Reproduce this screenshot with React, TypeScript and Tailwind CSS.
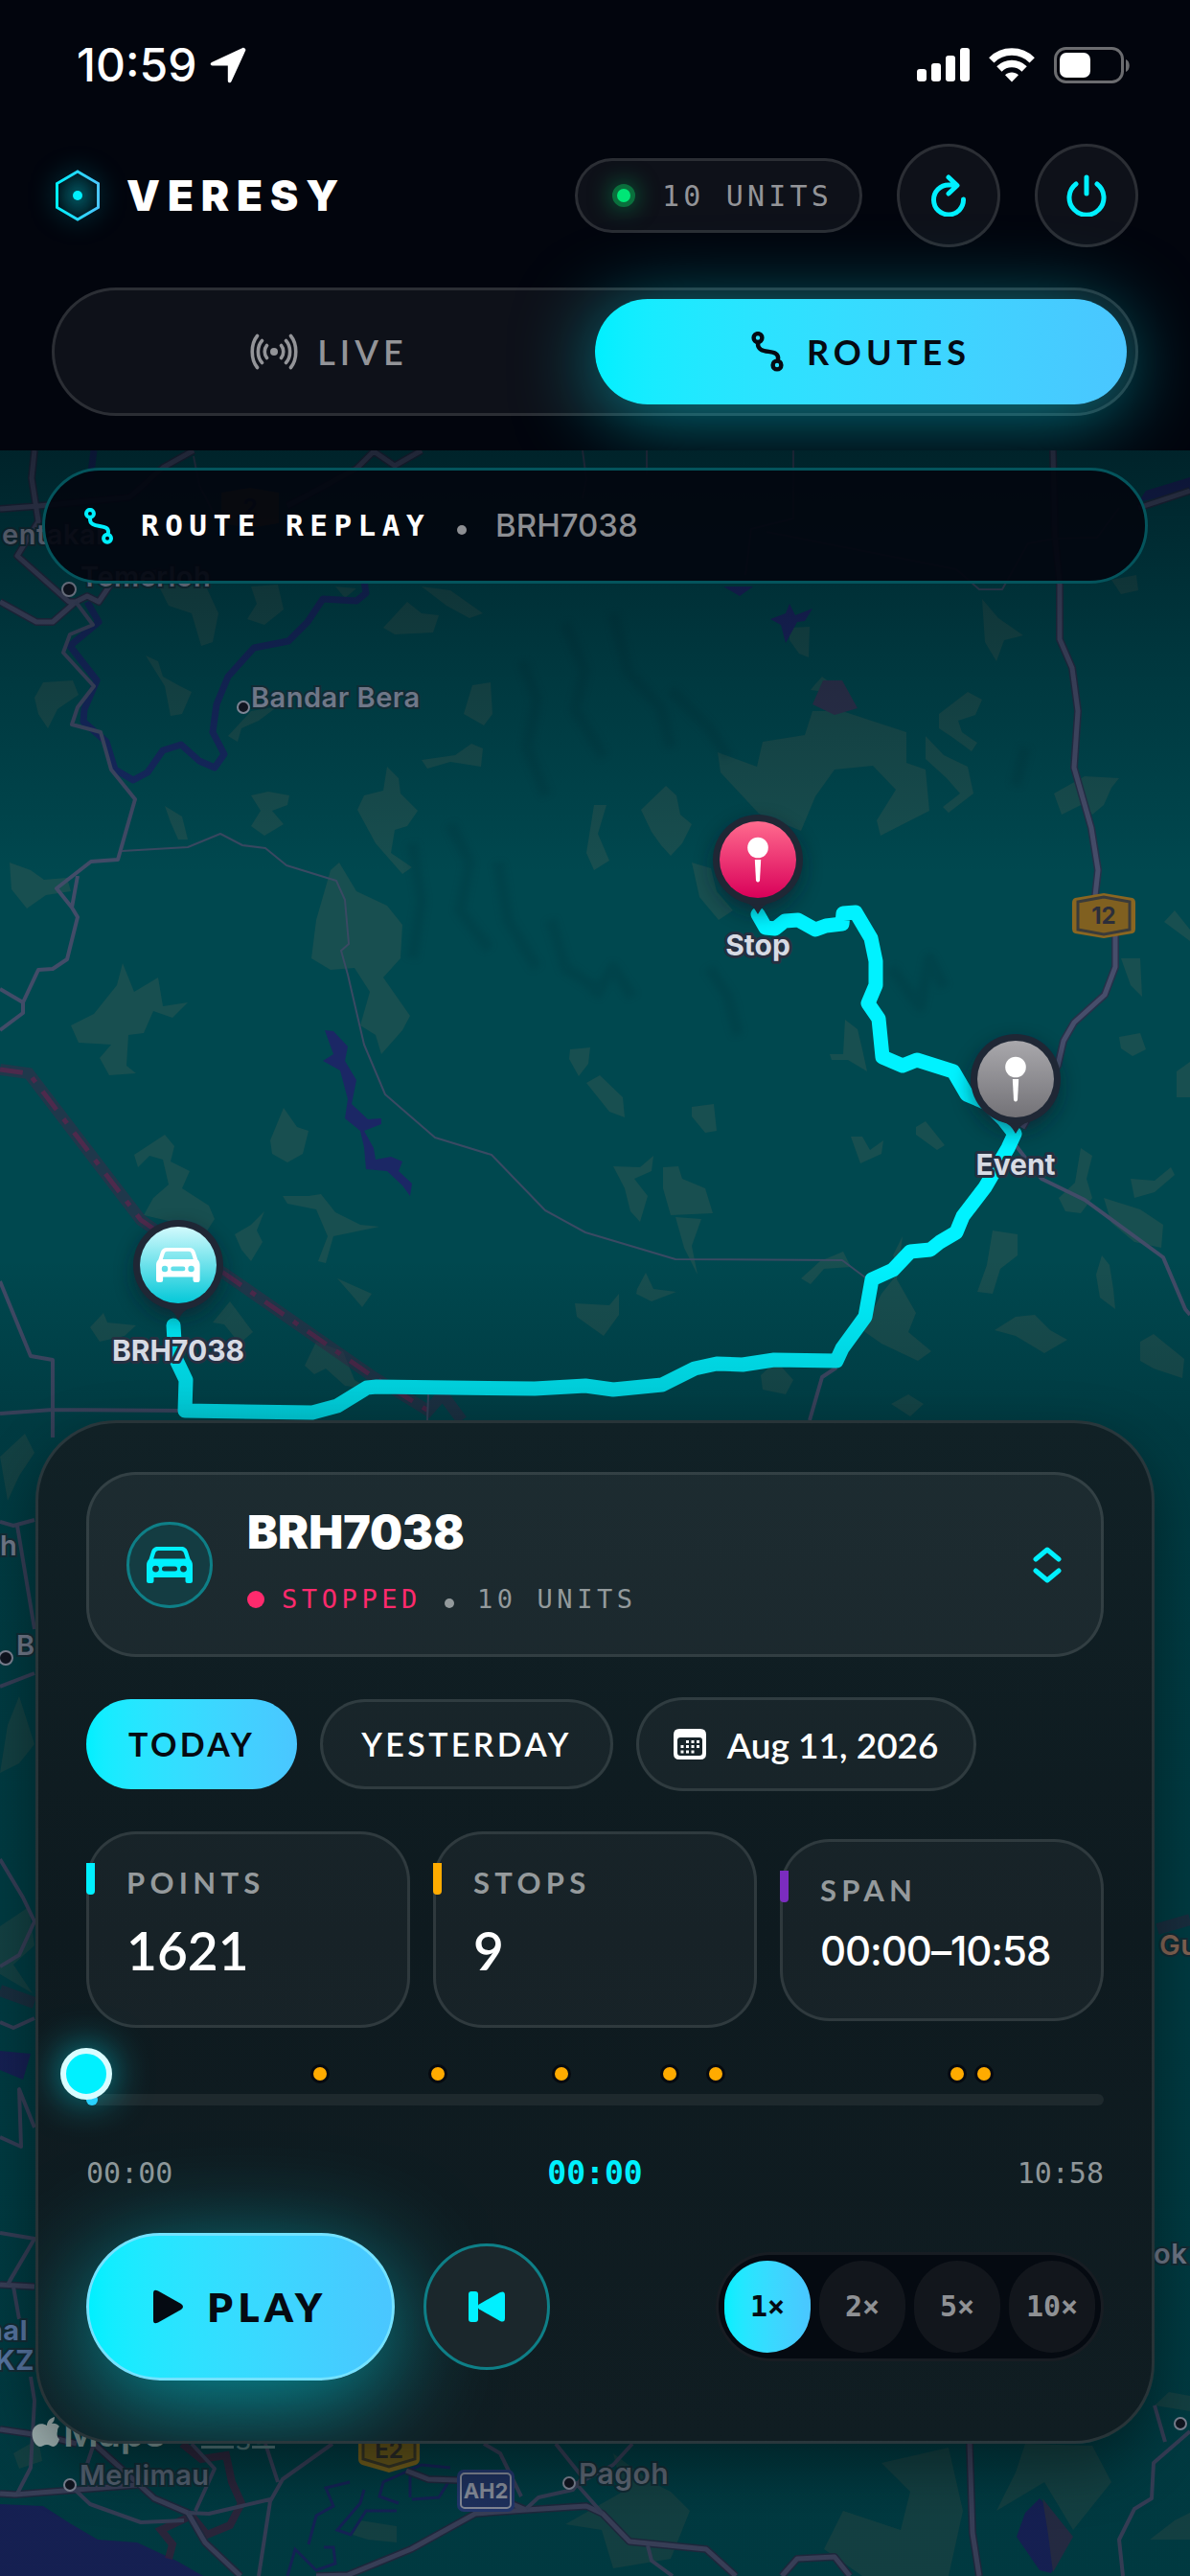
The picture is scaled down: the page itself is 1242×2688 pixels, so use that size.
import { useState } from 'react';
import clsx from 'clsx';

const STOP_MARKS = [23, 34.6, 46.7, 57.3, 61.9, 85.6, 88.2];
const SPEEDS = ['1×', '2×', '5×', '10×'];

const CAR_PATH =
  'M12 0H36C40 0 42 2 43 5L45.500 13C47 14.500 48 16.500 48 19V35.500A2.500 2.500 0 0 1 45.500 38H43A2.500 2.500 0 0 1 40.500 35.500V32H7.500V35.500A2.500 2.500 0 0 1 5 38H2.500A2.500 2.500 0 0 1 0 35.500V19C0 16.500 1 14.500 2.500 13L5 5C6 2 8 0 12 0ZM12.500 4C10.500 4 9.800 4.800 9 6.800L7.200 12.600H40.800L39 6.800C38.200 4.800 37.500 4 35.500 4ZM9.500 19.700A3.400 3.400 0 1 0 9.500 26.500A3.400 3.400 0 1 0 9.500 19.700ZM38.500 19.700A3.400 3.400 0 1 0 38.500 26.500A3.400 3.400 0 1 0 38.500 19.700ZM18.500 20.600H29.500A2.500 2.500 0 0 1 29.500 25.600H18.500A2.500 2.500 0 0 1 18.500 20.600Z';

const ROUTE_PATH =
  'M791 954L799 968L809 969L819 961L833 960L851 970L862 966L879 964L880 953L893 952L909 979L914 1003L914 1028L906 1047L917 1063L921 1103L942 1112L957 1106L995 1118L1009 1142L1030 1151L1048 1169L1059 1183L1052 1198L1028 1239L1005 1269L998 1286L981 1296L971 1304L950 1306L932 1325L910 1335L903 1374L879 1407L873 1420L808 1419L775 1424L748 1423L725 1428L691 1445L640 1450L611 1446L558 1449L393 1447L383 1448L352 1467L326 1474L193 1472L194 1440L183 1417L181 1383';

const VEGETATION_PATH = [
  'M749 785L790 800L796 774L840 767L848 742L879 742L946 764L946 796L966 803L970 846L919 872L915 856L935 824L911 799L871 803L851 831L836 867L792 849L752 806Z',
  'M165 610L215 612L228 640L222 670L210 674L200 640L176 632Z',
  'M262 612L290 610L296 636L276 652L258 646L268 630Z',
  'M350 612L372 614L360 624ZM400 655L425 628L440 640L458 642L452 660L412 662Z',
  'M440 612L470 616L504 640L490 645L466 632Z',
  'M152 684L165 690L170 706L188 716L200 722L190 745L178 747L172 716Z',
  'M45 712L76 710L82 725L60 740L50 760L40 745L36 728Z',
  'M238 768L262 742L290 737L270 752L252 760L248 774Z',
  'M493 715L512 712L514 745L505 757L484 745Z',
  'M440 793L475 788L492 776L504 781L502 800L470 795L446 802Z',
  'M373 845L380 830L400 825L404 800L416 812L418 828L436 846L425 862L412 866L408 890L430 905L420 912L392 880Z',
  'M262 830L280 826L302 830L300 840L284 846L296 860L276 872L262 862L272 846Z',
  'M172 841L190 852L196 876L186 876L178 858Z',
  'M620 840L633 840L624 870L636 898L620 908L612 890Z',
  'M669 845L695 820L706 830L710 850L722 860L712 880L700 893L690 882L680 868Z',
  'M722 900L742 906L748 930L765 950L750 960L730 936Z',
  'M980 745L1010 722L1025 730L1018 746L1000 752L1004 764L1020 775L1014 784L995 770L980 760Z',
  'M966 768L985 788L1010 800L1016 828L990 848L984 842L1002 828L988 812L966 792Z',
  'M1100 828L1132 810L1168 812L1160 822L1152 840L1140 850L1132 838L1108 850Z',
  'M1025 625L1042 645L1068 663L1048 668L1040 690L1028 670ZM1160 605L1186 600L1188 616L1170 620Z',
  'M824 655L845 654L844 686L834 682L824 668ZM850 715L858 706L866 712L862 722L846 720Z',
  'M10 900L32 908L46 918L70 916L74 930L48 934L28 948L12 928Z',
  'M330 960L345 908L354 900L372 930L404 945L420 965L418 1000L400 1020L428 1060L420 1075L398 1100L392 1080L376 1070L386 1035L370 1010L345 1012L325 1000Z',
  'M74 1070L98 1058L122 1028L128 1005L140 1035L165 1020L170 1050L196 1046L180 1062L160 1055L150 1078L134 1080L132 1112L142 1120L114 1122L104 1104L116 1090L82 1088Z',
  'M1170 1000L1190 1000L1192 1040L1180 1028ZM1168 1082L1190 1078L1196 1095L1182 1102L1170 1094Z',
  'M1228 1118L1242 1108V1145H1228ZM1215 962L1226 950L1242 970V982Z',
  'M866 1100L880 1100L882 1064L895 1074L900 1095L905 1118L885 1106L868 1106Z',
  'M595 1095L616 1093L614 1110L604 1123L594 1105ZM612 1130L626 1122L650 1145L652 1166L636 1160Z',
  'M722 1155L745 1152L748 1180L736 1182L722 1165Z',
  'M282 1190L296 1156L310 1176L322 1180L316 1204L300 1213L284 1204Z',
  'M140 1205L172 1184L182 1196L178 1212L198 1222L190 1240L218 1258L224 1272L210 1294L190 1296L180 1275L150 1268L160 1250L176 1236L170 1210L156 1206L144 1218Z',
  'M640 1217L668 1218L682 1206L680 1222L662 1230L676 1248L668 1275L658 1264L652 1240Z',
  'M692 1218L708 1217L712 1230L736 1240L744 1266L700 1268L692 1240Z',
  'M705 1270L732 1272L722 1300L728 1330L714 1302Z',
  'M888 1186L900 1186L908 1200L922 1190L920 1204L898 1214Z',
  'M956 1176L966 1170L986 1195L978 1200L956 1184Z',
  'M1105 1250L1122 1234L1128 1198L1140 1206L1134 1230L1140 1250L1128 1266L1112 1264Z',
  'M1152 1250L1190 1262L1214 1278L1212 1302L1184 1296L1160 1276Z',
  'M1180 1230L1205 1232L1222 1218L1226 1226L1205 1244L1184 1250Z',
  'M295 1248L322 1248L335 1246L350 1265L376 1278L396 1280L348 1290L340 1318L332 1316L342 1290L330 1262L300 1256Z',
  'M245 1288L262 1278L276 1264L268 1284L274 1296L262 1316L252 1304Z',
  'M1036 1284L1062 1288L1062 1310L1044 1324L1036 1350L1020 1348L1030 1320Z',
  'M836 1334L856 1316L880 1306L888 1322L860 1324L846 1340Z',
  'M665 1345L674 1328L682 1345L706 1348L680 1358L664 1350Z',
  'M600 1360L636 1362L646 1350L646 1372L630 1394L602 1374Z',
  'M352 1334L388 1350L378 1364L366 1350Z',
  'M940 1325L932 1310L942 1290L936 1335L956 1370L948 1390L972 1410L958 1420L920 1402L900 1388L920 1350Z',
  'M1150 1310L1158 1320L1162 1345L1164 1366L1148 1354L1144 1330Z',
  'M1038 1388L1060 1374L1080 1372L1096 1388L1114 1398L1090 1412L1060 1394Z',
  'M94 1385L108 1370L112 1380L142 1383L130 1394L104 1400ZM222 1380L240 1358L264 1390L250 1402L234 1382Z',
  'M318 1425L330 1400L358 1410L370 1440L388 1450L360 1446L340 1428L328 1434Z',
  'M794 1435L810 1420L828 1440L820 1455L796 1450ZM930 1465L948 1455L964 1465L950 1478Z',
  'M1190 1400L1204 1392L1236 1418L1234 1438L1204 1428L1190 1420Z',
  'M0 1520L26 1496L36 1516L20 1540L8 1566ZM8 1800L20 1770L36 1820L20 1840L0 1850Z',
  'M0 2010L30 1990L36 2030L14 2050L34 2080L0 2060Z',
  'M14 2560L40 2545L44 2568L20 2576ZM376 2630L414 2636L414 2653L384 2650L368 2645Z',
  'M640 2560L680 2590L700 2600L720 2620L700 2670L640 2680L628 2640L590 2634L650 2600Z',
  'M920 2570L990 2554L1005 2620L990 2688L900 2688L860 2660L880 2620L940 2640L950 2600Z',
  'M1070 2550L1140 2552L1160 2590L1120 2640L1090 2590L1040 2620L1060 2580Z',
  'M1205 2510L1220 2496L1242 2500V2516ZM1200 2650L1226 2630L1242 2622V2650Z',
].join('');

const MAJOR_ROADS = [
  'M1099 470L1101 560L1106 610L1106 667L1119 697L1125 742L1121 801L1139 864L1146 908L1143 935',
  'M1164 975L1164 1009L1153 1038L1121 1067L1110 1086L1104 1112L1067 1177',
  'M202 470L170 488L135 519L40 528L0 531M440 470L412 486L390 471L372 489L300 528',
  'M36 470L33 499L40 544L18 580L72 628L79 628',
  'M0 628L38 649L55 649L79 628L91 622L103 628L118 606L168 596',
  'M0 2602L16 2603L143 2593M0 2535L48 2542L80 2550M98 2550L161 2607L196 2622L214 2653L251 2688',
  'M424 2578L447 2587L478 2588M535 2613L549 2619L612 2615L629 2623L657 2652L737 2660L768 2688',
  'M549 2619L496 2623L429 2660L363 2687L330 2688M1012 2550L1015 2643L1022 2688',
  'M816 2688L832 2670L871 2668L887 2688M1242 512L1188 530M0 2384L36 2386',
].join('');

const MINOR_ROADS = [
  'M79 628L97 652L73 662L66 681L98 716L81 738L75 756L105 764L116 803L141 834L123 897L95 899L59 927L75 947L81 957L70 1001L55 1011L40 1012L24 1046L24 1057L0 1075M0 1032L24 1046M81 914L75 947',
  'M1060 1195L1087 1230L1132 1252L1214 1312L1237 1366L1242 1372',
  'M0 1337L32 1415L55 1419L55 1500M0 1475L55 1471L190 1472M873 1427L858 1437L845 1482',
  'M0 1588L14 1592L36 1586M18 1592L36 1700M0 1760L36 1746M0 1940L24 1980L36 2005L20 2040L0 2052M0 2110L14 2116L36 2106M36 2220L20 2180L22 2240L0 2230',
  'M0 2330L36 2336L10 2380M36 2336L8 2384M14 2386L20 2420M73 2593L94 2613L147 2632L192 2630M347 2550L295 2587L282 2610L270 2688M282 2608L218 2623L196 2622M98 2550L88 2580M277 2550L290 2590M200 2550L224 2576L204 2620M32 2480L36 2505L32 2575L18 2602',
  'M549 2618L562 2606L598 2598L608 2585L580 2550M600 2590L629 2623M660 2550L640 2572L606 2590M505 2550L522 2560L544 2605M1242 2537L1204 2570L1202 2607L1184 2618L1168 2650L1172 2688M676 2656L680 2672L702 2688M1205 2510L1216 2548',
].join('');

const FAINT_ROADS =
  'M127 888L196 884L230 870L253 882L277 885L299 903L351 919L360 939L364 985L356 992L363 1017L380 1090L402 1142L454 1187L513 1205L569 1263L611 1286L705 1314L879 1315L903 1333M202 476L208 506L222 534M608 470L612 500L608 520M675 470V495M828 470V541L784 552L778 600M446 1482L447 1455M800 555L998 594L1022 615L1046 615L1073 567L1101 562L1145 561L1168 530';

function RouteIcon({ className }: { className?: string }) {
  return (
    <svg viewBox="0 0 34 42" fill="none" stroke="currentColor" strokeWidth="4.400" strokeLinecap="round" className={className} aria-hidden>
      <circle cx="7" cy="6.500" r="4.400" />
      <circle cx="27" cy="35" r="4.400" />
      <path d="M7 12C6 26 30 16 28 29" />
    </svg>
  );
}

function CarIcon({ className }: { className?: string }) {
  return (
    <svg viewBox="0 0 48 38" fill="currentColor" fillRule="evenodd" className={className} aria-hidden>
      <path d={CAR_PATH} />
    </svg>
  );
}

function StatusBar() {
  return (
    <div className="flex h-[136px] items-center justify-between pr-[62px] pl-20 text-white">
      <div className="flex items-center gap-[14px]">
        <span className="font-['Inter',sans-serif] text-[48px] leading-none font-medium">10:59</span>
        <svg viewBox="0 0 38 38" className="size-[38px]" fill="currentColor" aria-hidden>
          <path d="M36.500 1.500C37.500 2.200 37.500 3 37.200 3.800L22.500 36C21.500 38.200 18.800 37.500 18.800 35.200V19.500H2.800C0.400 19.500 0 16.900 2 15.900L34.200 1C35 0.700 35.900 0.900 36.500 1.500Z" />
        </svg>
      </div>
      <div className="flex items-center gap-5">
        <svg viewBox="0 0 55 36" className="h-9 w-[55px]" fill="currentColor" aria-hidden>
          <rect y="22" width="10" height="13" rx="3" />
          <rect x="15" y="16" width="10" height="19" rx="3" />
          <rect x="30" y="8" width="10" height="27" rx="3" />
          <rect x="45" width="10" height="35" rx="3" />
        </svg>
        <svg viewBox="0 0 48 36" className="h-9 w-12" fill="none" stroke="currentColor" strokeWidth="7.500" aria-hidden>
          <path d="M2.800 12.800A30 30 0 0 1 45.200 12.800" />
          <path d="M10.900 22A18.500 18.500 0 0 1 37.100 22" />
          <path d="M24 35.500L17 28.300C21 24.600 27 24.600 31 28.300Z" fill="currentColor" stroke="none" />
        </svg>
        <svg viewBox="0 0 80 38" className="h-[38px] w-20" aria-hidden>
          <rect x="1.500" y="1.500" width="70" height="35" rx="11" fill="none" stroke="#6b6c6f" strokeWidth="3" />
          <rect x="6" y="6" width="32" height="26" rx="7" fill="#fff" />
          <path d="M75 13C80 15 80 24 75 26Z" fill="#6b6c6f" />
        </svg>
      </div>
    </div>
  );
}

function Header({ tab, onTabChange }: { tab: string; onTabChange: (tab: string) => void }) {
  const tabClass = 'flex h-[110px] flex-1 items-center justify-center gap-6 rounded-full text-[36px] leading-none tracking-[0.14em]';
  const activeClass = 'bg-linear-to-r from-[#00f0ff] to-[#4ac6ff] font-bold text-[#050a12] shadow-[0_12px_84px_rgba(0,240,255,0.5)]';
  const roundClass = 'flex size-[108px] items-center justify-center rounded-full border-3 border-white/12 bg-white/5 text-[#00f0ff]';

  return (
    <header className="bg-[#02050d] pb-9">
      <StatusBar />
      <div className="flex items-center px-[54px] pt-[14px]">
        <svg viewBox="0 0 54 60" className="h-[60px] w-[54px] drop-shadow-[0_0_12px_rgba(0,240,255,0.5)]" fill="none" aria-hidden>
          <defs>
            <linearGradient id="hex">
              <stop stopColor="#00f0ff" />
              <stop offset="1" stopColor="#4ac6ff" />
            </linearGradient>
            <radialGradient id="hexFill">
              <stop stopColor="#00f0ff" stopOpacity="0.25" />
              <stop offset="1" stopColor="#00f0ff" stopOpacity="0" />
            </radialGradient>
          </defs>
          <path d="M27 5L48.500 17.500V42.500L27 55L5.500 42.500V17.500Z" stroke="url(#hex)" fill="url(#hexFill)" strokeWidth="3" />
          <circle cx="27" cy="30" r="5" fill="#00f0ff" />
        </svg>
        <h1 className="ml-6 font-['Inter',sans-serif] text-[44px] leading-none font-black tracking-[0.18em] text-white">VERESY</h1>
        <div className="ml-auto flex items-center gap-9">
          <div className="flex h-[78px] items-center gap-7 rounded-full border-3 border-white/12 bg-white/5 pr-7 pl-9 font-['DejaVu_Sans_Mono',monospace] text-[30px] tracking-[0.14em] text-[#939498]">
            <span className="size-6 rounded-full border-[5px] border-[#0a6f3c] bg-[#00e676] shadow-[0_0_24px_rgba(0,230,118,0.5)]" />
            10 UNITS
          </div>
          <button type="button" aria-label="Refresh" className={roundClass}>
            <svg viewBox="0 0 44 44" className="size-11" fill="none" stroke="currentColor" strokeWidth="5" strokeLinecap="round" strokeLinejoin="round" aria-hidden>
              <path d="M37.500 26A15.500 15.500 0 1 1 22 11H30M22 3L31 11.500L22 20" />
            </svg>
          </button>
          <button type="button" aria-label="Sign out" className={roundClass}>
            <svg viewBox="0 0 44 44" className="size-11" fill="none" stroke="currentColor" strokeWidth="5" strokeLinecap="round" aria-hidden>
              <path d="M22 3V20M33 10A18 18 0 1 1 11 10" />
            </svg>
          </button>
        </div>
      </div>
      <div className="mx-[54px] mt-[42px] flex rounded-full border-3 border-white/12 bg-white/5 p-[9px]">
        <button
          type="button"
          aria-pressed={tab === 'live'}
          onClick={() => onTabChange('live')}
          className={clsx(tabClass, tab === 'live' ? activeClass : 'font-semibold text-[#939498]')}
        >
          <svg viewBox="0 0 50 38" className="-mr-1 h-[38px] w-[50px]" fill="none" stroke="currentColor" strokeWidth="3.600" strokeLinecap="round" aria-hidden>
            <circle cx="25" cy="19" r="4" fill="currentColor" stroke="none" />
            <path d="M17.500 12.500C14.500 16 14.500 22 17.500 25.500M12.500 7.500C7 13.500 7 24.500 12.500 30.500M7.500 2.500C0.500 11 0.500 27 7.500 35.500M32.500 12.500C35.500 16 35.500 22 32.500 25.500M37.500 7.500C43 13.500 43 24.500 37.500 30.500M42.500 2.500C49.500 11 49.500 27 42.500 35.500" />
          </svg>
          LIVE
        </button>
        <button
          type="button"
          aria-pressed={tab === 'routes'}
          onClick={() => onTabChange('routes')}
          className={clsx(tabClass, tab === 'routes' ? activeClass : 'font-semibold text-[#939498]')}
        >
          <RouteIcon className="h-[42px] w-[34px]" />
          ROUTES
        </button>
      </div>
    </header>
  );
}

function PinBase({ x, y, fill, label }: { x: number; y: number; fill: string; label: string }) {
  return (
    <g transform={`translate(${x} ${y})`}>
      <circle r="47" cy="8" fill="#0c1420" opacity="0.5" filter="url(#soft)" />
      <path d="M-14 44Q-5 47 0 57Q5 47 14 44Z" fill="#1f2735" />
      <circle r="47" fill="#1f2735" />
      <circle r="40" fill={fill} />
      <text y="100" textAnchor="middle" fontSize="30" fontWeight="700" fill="#d7dbe4" stroke="#263041" strokeWidth="6" strokeLinejoin="round" paintOrder="stroke">
        {label}
      </text>
    </g>
  );
}

function PinGlyph({ x, y }: { x: number; y: number }) {
  return (
    <g transform={`translate(${x} ${y})`} fill="#fff">
      <circle cy="-12.500" r="10.800" />
      <path d="M-3.200 0H3.200L2 22Q0 25 -2 22Z" />
    </g>
  );
}

function RouteMap() {
  return (
    <svg viewBox="0 470 1242 2218" preserveAspectRatio="xMidYMin slice" className="absolute inset-0 h-full w-full font-['Inter',sans-serif]" role="img" aria-label="Route map">
      <defs>
        <linearGradient id="shade" x1="0" y1="0" x2="0" y2="1">
          <stop stopColor="#00050c" stopOpacity="0.55" />
          <stop offset="0.1" stopColor="#00050c" stopOpacity="0.25" />
          <stop offset="0.2" stopColor="#00050c" stopOpacity="0" />
          <stop offset="0.38" stopColor="#00050c" stopOpacity="0" />
          <stop offset="0.46" stopColor="#00050c" stopOpacity="0.2" />
          <stop offset="1" stopColor="#00050c" stopOpacity="0.22" />
        </linearGradient>
        <linearGradient id="pinStop" x1="0" y1="0" x2="0" y2="1">
          <stop stopColor="#ff6b8e" />
          <stop offset="1" stopColor="#d90059" />
        </linearGradient>
        <linearGradient id="pinEvent" x1="0" y1="0" x2="0" y2="1">
          <stop stopColor="#a9a8ac" />
          <stop offset="1" stopColor="#737277" />
        </linearGradient>
        <linearGradient id="pinCar" x1="0" y1="0" x2="0" y2="1">
          <stop stopColor="#d2fafd" />
          <stop offset="1" stopColor="#04c8d8" />
        </linearGradient>
        <filter id="soft" x="-50%" y="-50%" width="200%" height="200%">
          <feGaussianBlur stdDeviation="10" />
        </filter>
      </defs>
      <rect y="470" width="1242" height="2218" fill="#00484f" />
      <path d={VEGETATION_PATH} fill="#184f50" />
      {/* terrain ridges */}
      <path
        d="M545 690L560 730L550 780L570 830M590 650L610 700L600 740L630 790M640 640L655 700L690 740L700 780M700 720L740 760L760 790M470 860L490 900L480 950L510 990M520 900L530 960L560 1010M575 960L590 1010L620 1030M430 880L440 940L430 1000M620 1040L640 1010L660 1040M740 1010L760 1040L770 1080M930 1010L960 1050L970 1000L985 1030M1070 780L1060 820"
        fill="none" stroke="#00363e" strokeWidth="12" strokeLinejoin="round" opacity="0.25" filter="url(#ridge)"
      />
      <filter id="ridge">
        <feGaussianBlur stdDeviation="3" />
      </filter>
      <g fill="#1b2765">
        <path d="M339 1075L348 1076L363 1092L360 1107L372 1127L367 1152L384 1168L398 1167L398 1173L380 1180L390 1198L392 1210L408 1207L420 1212L416 1222L430 1235L428 1248L420 1237L404 1222L382 1220L380 1197L376 1180L360 1167L363 1147L355 1117L337 1107L348 1100Z" />
        <path d="M824 630L830 642L848 635L840 648L832 649L820 671L815 652L804 646L820 640ZM755 612L786 612L772 622Z" />
        <path d="M1242 498L1196 512L1188 524L1242 512ZM0 2140L32 2143L24 2170L0 2160Z" />
        <path d="M0 2613L45 2615L73 2633L102 2650L143 2653L184 2672L212 2688H0ZM1085 2607L1105 2630L1118 2647L1097 2685L1085 2682L1061 2647L1070 2622Z" />
      </g>
      <path d="M859 710L879 710L895 739L871 746L848 735ZM1088 2607L1120 2647L1099 2684L1094 2645Z" fill="#2e3450" />
      <path
        d="M380 606L382 619L372 627L337 625L321 649L301 669L265 676L238 706L226 735L222 764L234 787L224 801L208 794L189 777L170 783L154 806L139 814L120 803L111 774L87 753L88 740L101 710L73 674L103 649L91 628M98 470L94 500"
        fill="none" stroke="#162a63" strokeWidth="7" strokeLinejoin="round"
      />
      <path
        d="M365 2590L340 2596L348 2615L330 2625L322 2655M380 2598L376 2612L352 2640L366 2645L382 2620L414 2620M470 2575L440 2572L400 2590L396 2605L416 2612M428 2580V2606M430 2608L458 2606L468 2590M300 2688L308 2660L330 2682L350 2675L348 2658L338 2658"
        fill="none" stroke="#192a68" strokeWidth="3"
      />
      <path d="M0 1116L30 1120L147 1273L186 1300L233 1328L387 1435L447 1472L462 1455L482 1482M0 2077L36 2090M1242 2003L1208 2013" fill="none" stroke="#342f49" strokeWidth="12" opacity="0.6" />
      <path d="M0 1116L30 1120L147 1273L186 1300L233 1328L387 1435L447 1472" fill="none" stroke="#4d2a4c" strokeWidth="5" strokeDasharray="24 12 6 12" />
      <path d="M190 2550L210 2566L236 2562L242 2590L252 2612L240 2635L216 2645L200 2625L168 2640L180 2655L176 2670" fill="none" stroke="#4c2444" strokeWidth="8" opacity="0.7" />
      <g fill="none" strokeLinejoin="round">
        <path d={MAJOR_ROADS} stroke="#263149" strokeWidth="8" />
        <path d={MAJOR_ROADS} stroke="#474e6b" strokeWidth="5" />
        <path d={MINOR_ROADS} stroke="#424c68" strokeWidth="4" />
        <path d={FAINT_ROADS} stroke="#3a4a63" strokeWidth="2" />
        <path d={ROUTE_PATH} stroke="#00f2ff" strokeWidth="15" strokeLinecap="round" />
      </g>
      <g stroke="#9ba2b4" strokeWidth="2" fill="#141925">
        <circle cx="72" cy="615" r="7" />
        <circle cx="254" cy="738" r="6" />
        <circle cx="6" cy="1730" r="7" />
        <circle cx="73" cy="2593" r="6" />
        <circle cx="594" cy="2591" r="6" />
        <circle cx="1232" cy="2529" r="6" />
      </g>
      <g fontSize="29" fontWeight="600" fill="#8c95a8" stroke="#173640" strokeWidth="4" paintOrder="stroke" letterSpacing="0.500">
        <text x="2" y="568">entakab</text>
        <text x="84" y="612">Temerloh</text>
        <text x="262" y="738">Bandar Bera</text>
        <text x="0" y="1623">h</text>
        <text x="17" y="1727">B</text>
        <text x="83" y="2593" fill="#68788a">Merlimau</text>
        <text x="604" y="2592" fontSize="30" fill="#75808f">Pagoh</text>
        <text x="1204" y="2362">ok</text>
        <text x="1210" y="2040" fill="#a37c66">Gu</text>
        <g fill="#6d92c8" fontWeight="700">
          <text x="29" y="2442" textAnchor="end">nal</text>
          <text x="36" y="2473" textAnchor="end">KZ</text>
        </g>
      </g>
      <g textAnchor="middle" fontSize="24" fontWeight="700">
        <path d="M231 514L261 509L291 514V546L261 551L231 546Z" fill="#7d6120" />
        <text x="261" y="538" fill="#262a36">2</text>
        <path d="M1122 937L1152 932L1182 937Q1185 938 1185 942V969Q1185 973 1182 974L1152 979L1122 974Q1119 973 1119 969V942Q1119 938 1122 937Z" fill="#8a6621" />
        <path d="M1125 941L1152 936L1179 941V970L1152 975L1125 970Z" fill="#806020" stroke="#3a3b3a" strokeWidth="3" />
        <text x="1152" y="964" fill="#2c2e3a">12</text>
        <path d="M374 2528H438V2566Q438 2570 434 2572L406 2580L378 2572Q374 2570 374 2566Z" fill="#8d7420" />
        <path d="M379 2528H433V2566L406 2574L379 2566Z" fill="#7d6a1e" stroke="#41402c" strokeWidth="3" />
        <text x="406" y="2565" fill="#34352f">E2</text>
        <rect x="477" y="2577" width="60" height="44" rx="7" fill="#2a4485" />
        <rect x="481" y="2581" width="52" height="36" rx="4" fill="#263d74" stroke="#a4abbb" strokeWidth="2" />
        <text x="507" y="2607" fontSize="22" fill="#a9b0bf">AH2</text>
      </g>
      <rect y="470" width="1242" height="2218" fill="url(#shade)" />
      <g fill="#9eb0b0">
        <path d="M54 2529C56 2527 57 2525 57 2522C53 2523 49 2526 49 2531C51 2531 53 2530 54 2529ZM60 2537C60 2534 61 2533 62 2532C58 2527 53 2529 49 2531C44 2528 38 2529 35 2534C31 2541 36 2553 42 2553C44 2553 46 2551 49 2551C52 2551 53 2553 56 2553C59 2552 61 2549 62 2545C60 2544 59 2541 60 2537Z" />
        <text x="66" y="2553" fontSize="40" fontWeight="600" fill="#7d9696">Maps</text>
        <text x="210" y="2550" fontSize="30" textDecoration="underline" fill="#4f7376">Legal</text>
      </g>
      <PinBase x={791} y={897} fill="url(#pinStop)" label="Stop" />
      <PinGlyph x={791} y={897} />
      <PinBase x={1060} y={1126} fill="url(#pinEvent)" label="Event" />
      <PinGlyph x={1060} y={1126} />
      <PinBase x={186} y={1320} fill="url(#pinCar)" label="BRH7038" />
      <path d={CAR_PATH} transform="translate(163 1302) scale(0.95)" fill="#fff" fillRule="evenodd" />
    </svg>
  );
}

function StatCard({ label, value, accent, compact }: { label: string; value: string; accent: string; compact?: boolean }) {
  return (
    <div className="relative flex-1 basis-0 rounded-[52px] border-3 border-white/10 bg-white/4 pt-8 pb-10 pl-[39px]">
      <span className={clsx('absolute top-[30px] -left-[3px] h-[33px] w-[9px] rounded-b-sm', accent)} />
      <p className="text-[31px] leading-9 font-bold tracking-[0.17em] text-[#959a9c]">{label}</p>
      <p className={clsx('mt-4 whitespace-nowrap text-white', compact ? "font-['Inter',sans-serif] text-[42px] leading-[60px] font-medium tracking-tight" : 'text-[55px] leading-[75px] font-semibold')}>
        {value}
      </p>
    </div>
  );
}

function ReplayPanel() {
  const [speed, setSpeed] = useState('1×');
  const [position, setPosition] = useState(0);
  const chipClass = 'flex items-center rounded-full leading-none text-white';

  return (
    <section className="relative mx-[37px] mb-[138px] overflow-hidden rounded-[84px] border-3 border-white/10 bg-linear-to-b from-[#112126] via-[#0e1a1f] to-[#101d22] px-[50px] pt-[51px] pb-[63px] shadow-[0_24px_60px_rgba(0,0,0,0.4)]">
      <button type="button" className="flex h-[193px] w-full items-center rounded-[52px] border-3 border-white/10 bg-white/5 px-[39px] text-left">
        <span className="flex size-[90px] items-center justify-center rounded-full border-3 border-[#0e7f87] bg-[#143c42] text-[#00f0ff]">
          <CarIcon className="h-[38px] w-12" />
        </span>
        <span className="ml-9 flex flex-col gap-6 pb-3">
          <span className="font-['Inter',sans-serif] text-[48px] leading-[60px] font-black text-white">BRH7038</span>
          <span className="flex items-center font-['DejaVu_Sans_Mono',monospace] text-[27px] leading-8 tracking-[0.17em]">
            <span className="size-[18px] rounded-full bg-[#ff2a6d]" />
            <span className="ml-[18px] text-[#ff2a6d]">STOPPED</span>
            <span className="mt-2 ml-6 size-[10px] rounded-full bg-[#939a9c]" />
            <span className="ml-6 text-[#939a9c]">10 UNITS</span>
          </span>
        </span>
        <svg viewBox="0 0 30 40" className="mr-[2px] ml-auto h-10 w-[30px] text-[#00f0ff]" fill="none" stroke="currentColor" strokeWidth="5" strokeLinecap="round" strokeLinejoin="round" aria-hidden>
          <path d="M3 14L15 4L27 14M3 26L15 36L27 26" />
        </svg>
      </button>

      <div className="mt-[42px] flex items-center gap-6">
        <button type="button" className={clsx(chipClass, 'h-[94px] bg-linear-to-r from-[#00f0ff] to-[#4ac6ff] px-11 text-[34px] font-bold tracking-widest text-[#050a12]!')}>
          TODAY
        </button>
        <button type="button" className={clsx(chipClass, 'h-[94px] border-3 border-white/10 bg-white/4 px-10 text-[34px] font-semibold tracking-widest')}>
          YESTERDAY
        </button>
        <button type="button" className={clsx(chipClass, 'h-[98px] gap-[22px] border-3 border-white/10 bg-white/4 px-9 text-[37px] font-semibold')}>
          <svg viewBox="0 0 34 32" className="h-8 w-[34px]" fill="currentColor" fillRule="evenodd" aria-hidden>
            <path d="M6 0H28Q34 0 34 6V26Q34 32 28 32H6Q0 32 0 26V6Q0 0 6 0ZM7 9Q4 9 4 12V25Q4 28 7 28H27Q30 28 30 25V12Q30 9 27 9Z" />
            <path d="M13 12H16V15H13ZM18.500 12H21.500V15H18.500ZM24 12H27V15H24ZM7.500 17H10.500V20H7.500ZM13 17H16V20H13ZM18.500 17H21.500V20H18.500ZM24 17H27V20H24ZM7.500 22.500H10.500V25.500H7.500ZM13 22.500H16V25.500H13ZM18.500 22.500H21.500V25.500H18.500Z" />
          </svg>
          Aug 11, 2026
        </button>
      </div>

      <div className="mt-[42px] flex items-center gap-6">
        <StatCard label="POINTS" value="1621" accent="bg-[#00f0ff]" />
        <StatCard label="STOPS" value="9" accent="bg-[#ffab00]" />
        <StatCard label="SPAN" value="00:00–10:58" accent="bg-[#7b2cbf]" compact />
      </div>

      <div className="relative mt-[21px] h-[60px]">
        <div className="absolute inset-x-0 bottom-0 h-3 rounded-full bg-[#1e292d]">
          <div className="h-3 min-w-3 rounded-full bg-[#33ccff]" style={{ width: `${position}%` }} />
        </div>
        {STOP_MARKS.map((mark) => (
          <span key={mark} className="absolute top-[17px] size-5 -translate-x-1/2 rounded-full border-3 border-[#060a10] bg-[#ffab00]" style={{ left: `${mark}%` }} />
        ))}
        <span
          className="absolute top-0 size-[54px] -translate-x-1/2 rounded-full border-6 border-[#d9fcff] bg-[#00f0ff] shadow-[0_0_42px_rgba(0,240,255,0.6)]"
          style={{ left: `${position}%` }}
        />
        <input
          type="range"
          aria-label="Replay position"
          min={0}
          max={100}
          value={position}
          onChange={(e) => setPosition(Number(e.target.value))}
          className="absolute inset-0 w-full cursor-pointer opacity-0"
        />
      </div>

      <div className="mt-[53px] flex items-center justify-between font-['DejaVu_Sans_Mono',monospace] text-[30px] leading-9 text-[#8f9698]">
        <span>00:00</span>
        <span className="text-[33px] font-bold text-[#00f0ff]">00:00</span>
        <span>10:58</span>
      </div>

      <div className="mt-11 flex items-center">
        <button
          type="button"
          className="flex h-[154px] w-[322px] items-center justify-center gap-6 rounded-full border-3 border-[#74e2ff] bg-linear-to-r from-[#00f0ff] to-[#4ac6ff] text-[42px] leading-none font-extrabold tracking-[0.13em] text-[#050a12] shadow-[0_24px_108px_rgba(0,240,255,0.55)]"
        >
          <svg viewBox="0 0 32 36" className="h-9 w-8" fill="currentColor" aria-hidden>
            <path d="M0 4Q0 -1 5 1.500L29 15Q33 18 29 21L5 34.500Q0 37 0 32Z" />
          </svg>
          PLAY
        </button>
        <button type="button" aria-label="Back to start" className="ml-[30px] flex size-[132px] items-center justify-center rounded-full border-3 border-[#0e7f87] bg-[#1b272c] text-[#00f0ff]">
          <svg viewBox="0 0 38 32" className="h-8 w-[38px]" fill="currentColor" aria-hidden>
            <rect width="10" height="32" rx="3" />
            <path d="M11 13.500L33 1Q38 -1 38 4V28Q38 33 33 31L11 18.500Q8 16 11 13.500Z" />
          </svg>
        </button>
        <div className="ml-auto flex gap-[9px] rounded-full border-3 border-white/8 bg-[#050a11] p-[6px] font-['DejaVu_Sans_Mono',monospace] text-[30px] leading-none font-bold">
          {SPEEDS.map((item) => (
            <button
              key={item}
              type="button"
              aria-pressed={speed === item}
              onClick={() => setSpeed(item)}
              className={clsx(
                'flex h-24 w-[90px] items-center justify-center rounded-full',
                speed === item ? 'bg-linear-to-r from-[#00f0ff] to-[#4ac6ff] text-[#050a12]' : 'bg-[#12161c] text-[#8f9194]',
              )}
            >
              {item}
            </button>
          ))}
        </div>
      </div>
    </section>
  );
}

export default function App() {
  const [tab, setTab] = useState('routes');

  return (
    <main className="flex min-h-screen flex-col bg-[#02050d] font-['Lato',sans-serif]">
      <Header tab={tab} onTabChange={setTab} />
      <div className="relative flex flex-1 flex-col overflow-hidden">
        <RouteMap />
        <div className="relative mx-11 mt-[18px] flex h-[121px] items-center rounded-full border-3 border-[#04545c] bg-[#02060e]/90 px-10 text-white">
          <RouteIcon className="h-[38px] w-8 text-[#00f0ff]" />
          <span className="ml-7 font-['DejaVu_Sans_Mono',monospace] text-[31px] font-bold tracking-[0.21em]">ROUTE REPLAY</span>
          <span className="mt-2 ml-7 size-[10px] rounded-full bg-[#8d8f93]" />
          <span className="ml-[30px] font-['Inter',sans-serif] text-[33px] font-medium text-[#8d8f93]">BRH7038</span>
        </div>
        <div className="min-h-24 flex-1" />
        <ReplayPanel />
      </div>
    </main>
  );
}
